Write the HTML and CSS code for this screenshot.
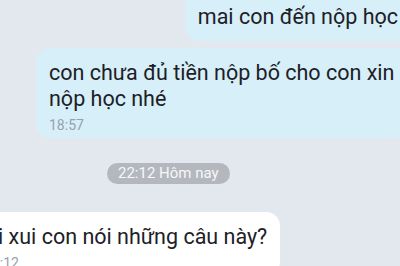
FILE: index.html
```html
<!doctype html>
<html lang="vi">
  <head>
    <meta charset="utf-8" />
    <meta name="viewport" content="width=device-width, initial-scale=1" />
    <title>Tin nhắn</title>
    <link rel="stylesheet" href="styles.css">
  </head>
  <body>
    <div class="chat">
      <div class="msg msg-out msg-top">
        <p>mai con đến nộp học</p>
      </div>
      <div class="msg msg-out msg-wide">
        <p>con chưa đủ tiền nộp bố cho con xin nộp học nhé</p>
        <span class="time">18:57</span>
      </div>
      <div class="day">22:12 Hôm nay</div>
      <div class="msg msg-in">
        <p>Ai xui con nói những câu này?</p>
        <span class="time">22:12</span>
      </div>
    </div>
  </body>
</html>
```

FILE: styles.css
```css
body {
  margin: 0;
  height: 266px;
  overflow: hidden;
  font-family: Roboto, "Noto Sans", sans-serif;
  color: #1d2126;
  background: #e3e7ee;
}
.chat {
  display: flex;
  flex-direction: column;
  width: 440px;
  margin: -8px 0 0 -29px;
}
.msg {
  box-sizing: border-box;
  padding: 12px 13px 4px;
  border-radius: 14px;
}
.msg p {
  margin: 0;
  font-size: 21.5px;
  line-height: 26px;
}
.msg-out {
  align-self: flex-end;
  background: #d6eff9;
}
.msg-top {
  padding-bottom: 11px;
}
.msg-wide {
  width: 372px;
  margin-top: 7px;
  margin-right: 3px;
  padding-right: 10px;
}
.msg-in {
  align-self: flex-start;
  background: #ffffff;
}
.time {
  display: block;
  margin-top: 4px;
  font-size: 14px;
  line-height: 18px;
  color: #97a2ab;
}
.day {
  align-self: flex-start;
  margin: 25px 0 28px 136px;
  padding: 0 11px;
  border-radius: 11px;
  background: #b4b8be;
  color: #f6f7f9;
  font-size: 15px;
  line-height: 21px;
}
```
